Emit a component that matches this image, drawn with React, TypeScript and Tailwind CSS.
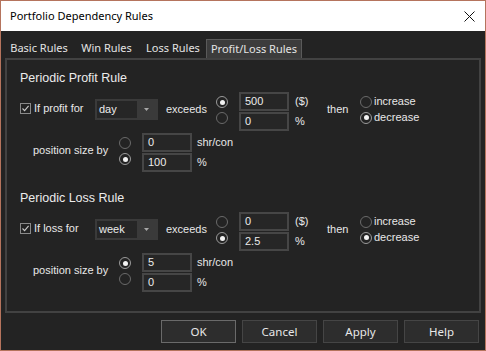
import React from "react";

const ui = "font-['Noto_Sans','Open_Sans',sans-serif]";
const ctl = "font-['Liberation_Sans',Arial,sans-serif]";

function Radio({ checked = false }: { checked?: boolean }) {
  return (
    <span
      className={`flex h-[12px] w-[12px] items-center justify-center rounded-full border ${
        checked ? "border-[#9a9a9a]" : "border-[#6a6a6a]"
      }`}
    >
      {checked && <span className="h-[5px] w-[5px] rounded-full bg-[#f2f2f2]" />}
    </span>
  );
}

function Field({ value }: { value: string }) {
  return (
    <div className="flex h-[19px] w-[50px] items-center border-2 border-[#464646] bg-[#262626] pl-[4px] text-[11px] text-[#ececec]">
      {value}
    </div>
  );
}

function Checkbox() {
  return (
    <span className="flex h-[11px] w-[11px] items-center justify-center border border-[#8a8a8a]">
      <svg width="9" height="9" viewBox="0 0 9 9">
        <path d="M1.5 4.5 L3.6 6.6 L7.6 1.8" fill="none" stroke="#c8c8c8" strokeWidth="1.1" />
      </svg>
    </span>
  );
}

function Dropdown({ value }: { value: string }) {
  return (
    <div className="mt-[7px] flex h-[21px] w-[63px] bg-[#3a3a3a] p-[2px]">
      <div className="flex flex-1 items-center bg-[#262626] pl-[2px] text-[11px] text-[#ececec]">{value}</div>
      <div className="flex w-[19px] items-center justify-center">
        <svg width="5" height="3" viewBox="0 0 5 3">
          <path d="M0 0 H5 L2.5 3 Z" fill="#a8a8a8" />
        </svg>
      </div>
    </div>
  );
}

type RuleProps = {
  title: string;
  label: string;
  period: string;
  amount: [string, string];
  amountSel: 0 | 1;
  size: [string, string];
  sizeSel: 0 | 1;
};

function RuleSection({ title, label, period, amount, amountSel, size, sizeSel }: RuleProps) {
  return (
    <div className="flex h-[122px] flex-col">
      <div className="h-[14px] text-[12.5px] leading-[14px] text-[#ececec]">{title}</div>

      <div className="mt-[7px] flex h-[40px] items-start text-[11px] leading-[13px] text-[#e8e8e8]">
        <div className="mt-[10px] flex w-[75px] items-center gap-[3px]">
          <Checkbox />
          <span>{label}</span>
        </div>
        <Dropdown value={period} />
        <div className="ml-[8px] mt-[11px] w-[49px]">exceeds</div>
        <div className="flex w-[24px] flex-col gap-[4px] pl-[1px] pt-[4px]">
          <Radio checked={amountSel === 0} />
          <Radio checked={amountSel === 1} />
        </div>
        <div className="flex w-[50px] flex-col gap-[1px]">
          <Field value={amount[0]} />
          <Field value={amount[1]} />
        </div>
        <div className="flex w-[38px] flex-col gap-[7px] pl-[6px] pt-[3px]">
          <span>($)</span>
          <span>%</span>
        </div>
        <div className="mt-[11px] w-[33px]">then</div>
        <div className="flex flex-col gap-[3px] pt-[3px]">
          <div className="flex items-center gap-[2px]">
            <Radio />
            <span>increase</span>
          </div>
          <div className="flex items-center gap-[2px]">
            <Radio checked />
            <span>decrease</span>
          </div>
        </div>
      </div>

      <div className="mt-[1px] flex h-[40px] items-start text-[11px] leading-[13px] text-[#e8e8e8]">
        <div className="ml-[13px] mt-[11px] w-[86px]">position size by</div>
        <div className="flex w-[23px] flex-col gap-[4px] pt-[4px]">
          <Radio checked={sizeSel === 0} />
          <Radio checked={sizeSel === 1} />
        </div>
        <div className="flex w-[50px] flex-col gap-[1px]">
          <Field value={size[0]} />
          <Field value={size[1]} />
        </div>
        <div className="flex flex-col gap-[7px] pl-[5px] pt-[3px]">
          <span>shr/con</span>
          <span>%</span>
        </div>
      </div>
    </div>
  );
}

export default function App() {
  const tabs = [
    { name: "Basic Rules", w: "w-[68px]" },
    { name: "Win Rules", w: "w-[67px]" },
    { name: "Loss Rules", w: "w-[66px]" },
  ];
  const buttons = ["OK", "Cancel", "Apply", "Help"];

  return (
    <div className={`flex h-[351px] w-[486px] flex-col border border-[#b5745d] ${ui}`}>
      <div className="flex h-[30px] items-center justify-between bg-white pl-[9px] pr-[10px]">
        <span className="text-[11px] text-black">Portfolio Dependency Rules</span>
        <svg width="11" height="11" viewBox="0 0 11 11">
          <path d="M0.5 0.5 L10.5 10.5 M10.5 0.5 L0.5 10.5" stroke="#111" strokeWidth="1" />
        </svg>
      </div>

      <div className="flex flex-1 flex-col bg-[#232323] px-[4px] pt-[8px]">
        <div className="flex h-[19px] text-[11px] text-[#e4e4e4]">
          {tabs.map((t) => (
            <div key={t.name} className={`flex items-center justify-center ${t.w}`}>
              {t.name}
            </div>
          ))}
          <div className="flex w-[96px] items-center justify-center border border-b-0 border-[#5a5a5a] bg-[#3c3c3c]">
            Profit/Loss Rules
          </div>
        </div>

        <div className={`flex h-[255px] flex-col border-2 border-[#424242] pl-[13px] pt-[11px] ${ctl}`}>
          <RuleSection
            title="Periodic Profit Rule"
            label="If profit for"
            period="day"
            amount={["500", "0"]}
            amountSel={0}
            size={["0", "100"]}
            sizeSel={1}
          />
          <RuleSection
            title="Periodic Loss Rule"
            label="If loss for"
            period="week"
            amount={["0", "2.5"]}
            amountSel={1}
            size={["5", "0"]}
            sizeSel={0}
          />
        </div>

        <div className="mr-[2px] mt-[7px] flex justify-end gap-[6px]">
          {buttons.map((b) => (
            <button
              key={b}
              type="button"
              className={`flex h-[23px] w-[75px] items-center justify-center border bg-[#2d2d2d] text-[11.5px] text-[#e8e8e8] ${
                b === "OK" ? "border-[#6a6a6a]" : "border-[#454545]"
              }`}
            >
              {b}
            </button>
          ))}
        </div>
      </div>
    </div>
  );
}
